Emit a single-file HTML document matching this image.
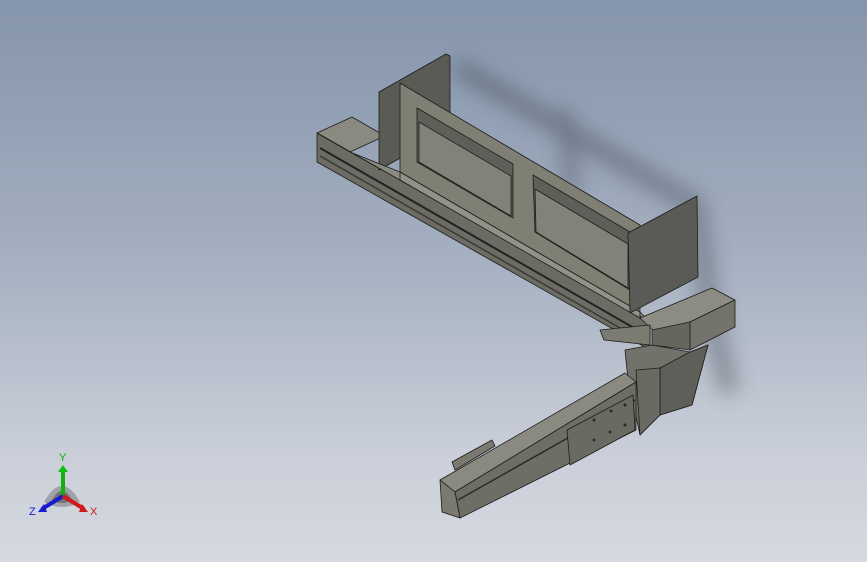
<!DOCTYPE html>
<html><head><style>
html,body{margin:0;padding:0;width:867px;height:562px;overflow:hidden}
body{background:linear-gradient(180deg,#8595ab 0%,#a4afc0 45%,#c9ced8 80%,#d6d9e0 100%)}
svg{position:absolute;left:0;top:0}
</style></head><body>
<svg width="867" height="562" viewBox="0 0 867 562" font-family="Liberation Sans, sans-serif">
<defs>
<filter id="b" x="-20%" y="-20%" width="140%" height="140%"><feGaussianBlur stdDeviation="10"/></filter>
</defs>
<g filter="url(#b)" fill="none" stroke="#3e4450" opacity="0.45" stroke-linecap="round">
<path d="M462,70 L695,205 L712,320 L728,385" stroke-width="18"/>
<path d="M565,115 L572,190" stroke-width="14"/>
</g>
<g stroke="#1c1c1a" stroke-width="0.8" stroke-linejoin="round">
<!-- long rail -->
<polygon points="317,133 352,117 385,136 350,152" fill="#8a8a80"/>
<polygon points="317,133 650,322 650,350 317,162" fill="#6c6c64"/>
<line x1="320" y1="148" x2="648" y2="336" stroke="#222" stroke-width="2"/>
<line x1="320" y1="156" x2="648" y2="344" stroke="#3a3a36" stroke-width="1.5"/>
<!-- left end plate -->
<polygon points="379,92 446,54 450,56 450,130 379,170" fill="#5b5b56"/>
<!-- back plate -->
<polygon points="400,83 640,225 640,312 400,172" fill="#7f7f74"/>
<polygon points="417,108 513,164 513,218 417,162" fill="#5f5f5a"/>
<polygon points="419,122 511,176 511,216 419,162" fill="#828279"/>
<polygon points="533,175 630,232 630,290 535,232" fill="#5f5f5a"/>
<polygon points="535,189 628,244 628,288 536,232" fill="#828279"/>
<!-- rail top strip in front of bracket -->
<polygon points="350,152 400,172 640,312 650,322 317,133" fill="#8a8a80"/>
<polygon points="400,172 640,312 640,318 400,180" fill="#929289"/>
<!-- right end plate -->
<polygon points="628,233 697,196 698,277 630,313" fill="#5a5a57"/>
<!-- carriage block -->
<polygon points="640,318 712,288 735,300 690,322 655,332" fill="#8c8c84"/>
<polygon points="690,322 735,300 735,327 690,350" fill="#74746c"/>
<polygon points="652,330 690,322 690,350 652,345" fill="#66665f"/>
<polygon points="600,330 650,325 650,345 604,340" fill="#7b7b72"/>
<!-- vertical bracket -->
<polygon points="625,350 652,345 690,352 708,345 692,405 660,415 640,435 628,380" fill="#72726a"/>
<polygon points="660,368 690,352 708,345 692,405 660,415" fill="#5f5f59"/>
<polygon points="636,370 660,368 660,415 640,435" fill="#6a6a62"/>
<!-- lower rail -->
<polygon points="440,480 625,373 636,382 455,492" fill="#8a8a80"/>
<polygon points="455,492 636,382 636,430 460,518" fill="#6e6e66"/>
<polygon points="440,480 455,492 460,518 442,512" fill="#7a7a70"/>
<line x1="458" y1="500" x2="635" y2="400" stroke="#2a2a28" stroke-width="1.5"/>
<polygon points="452,462 492,440 495,446 455,470" fill="#7a7a70"/>
<polygon points="567,430 633,395 635,430 570,465" fill="#6a6a63"/>
</g>
<g fill="#2a2a28"><circle cx="594" cy="420" r="1.5"/><circle cx="611" cy="411" r="1.5"/><circle cx="594" cy="440" r="1.5"/><circle cx="610" cy="432" r="1.5"/><circle cx="625" cy="405" r="1.5"/><circle cx="625" cy="425" r="1.5"/></g>
<g>
<path d="M44,502 Q62,470 80,502 Q62,512 44,502Z" fill="#666" opacity="0.45"/>
<path d="M52,500 Q62,482 72,500 Q62,506 52,500Z" fill="#444" opacity="0.5"/>
<line x1="63" y1="496" x2="63" y2="470" stroke="#10b010" stroke-width="4"/>
<polygon points="58,472 63,465 68,472" fill="#10c010"/>
<line x1="63" y1="496" x2="42" y2="509" stroke="#1a1ad0" stroke-width="4"/>
<polygon points="38,512 44,504 47,512" fill="#1a1ad0"/>
<line x1="63" y1="496" x2="84" y2="509" stroke="#d01a1a" stroke-width="4"/>
<polygon points="88,512 82,504 79,512" fill="#d01a1a"/>
<text x="59" y="461" font-size="11" fill="#10b010">Y</text>
<text x="29" y="515" font-size="11" fill="#1a1ad0">Z</text>
<text x="90" y="515" font-size="11" fill="#d01a1a">X</text>
</g>
</svg>
</body></html>
